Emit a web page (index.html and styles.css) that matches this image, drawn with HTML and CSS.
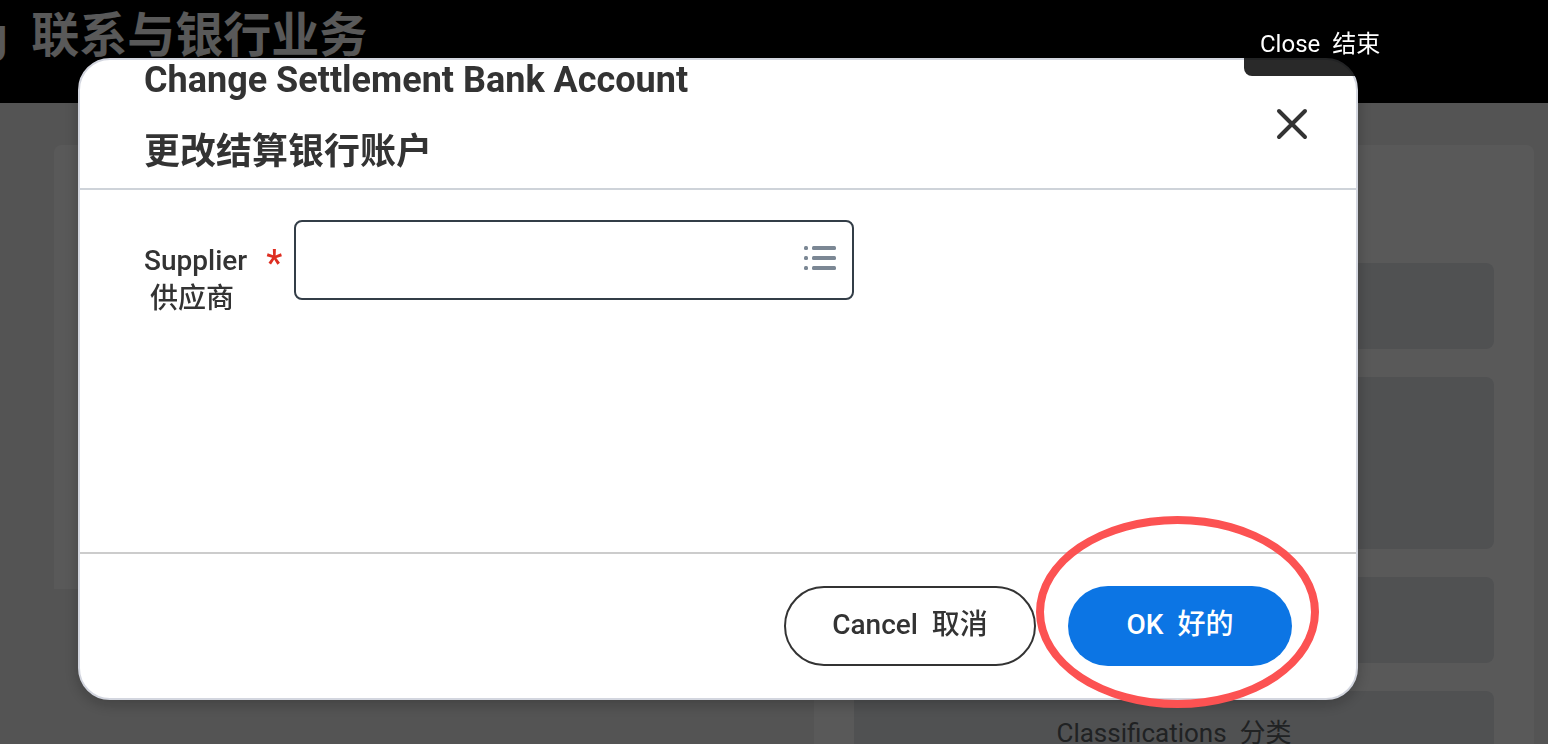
FILE: index.html
```html
<!DOCTYPE html>
<html lang="en">
<head>
  <meta charset="UTF-8">
  <title>Change Settlement Bank Account</title>
  <link rel="stylesheet" href="styles.css">
</head>
<body>

  <header class="page-header">
    <h1>g&nbsp; 联系与银行业务</h1>
  </header>

  <main class="page-content">
    <section class="panel panel-short"></section>
    <section class="panel panel-tasks">
      <div class="task"></div>
      <div class="task task-tall"></div>
      <div class="task"></div>
      <button class="task" type="button">Classifications&nbsp; 分类</button>
    </section>
  </main>

  <div class="overlay">
    <div class="modal" role="dialog" aria-labelledby="modal-title">
      <div class="modal-header">
        <h2 id="modal-title">Change Settlement Bank Account<br>更改结算银行账户</h2>
        <div class="close-wrap">
          <button class="close" type="button" aria-label="Close">
            <svg width="32" height="32" viewBox="0 0 32 32">
              <path d="M3 3L29 29M29 3L3 29" stroke="#333" stroke-width="4" stroke-linecap="round"/>
            </svg>
          </button>
          <span class="tooltip">Close&nbsp; 结束</span>
        </div>
      </div>

      <div class="modal-body">
        <label for="supplier">Supplier<br>供应商&nbsp;</label>
        <span class="required">*</span>
        <div class="prompt">
          <input type="text" id="supplier" required>
          <svg class="list-icon" width="32" height="24" viewBox="0 0 32 24" fill="#7b8794">
            <rect x="0" y="0" width="4" height="4" rx="1.5"/>
            <rect x="8" y="0" width="24" height="4" rx="1.5"/>
            <rect x="0" y="10" width="4" height="4" rx="1.5"/>
            <rect x="8" y="10" width="24" height="4" rx="1.5"/>
            <rect x="0" y="20" width="4" height="4" rx="1.5"/>
            <rect x="8" y="20" width="24" height="4" rx="1.5"/>
          </svg>
        </div>
      </div>

      <div class="modal-footer">
        <button class="btn btn-cancel" type="button">Cancel&nbsp; 取消</button>
        <button class="btn btn-ok" type="button">OK&nbsp; 好的</button>
      </div>
    </div>
  </div>

</body>
</html>
```

FILE: styles.css
```css
* {
  box-sizing: border-box;
}

body {
  margin: 0;
  height: 100vh;
  overflow: hidden;
  background-color: #f0f0f0;
  color: #333;
  font-family: Roboto, "Noto Sans CJK SC", sans-serif;
}

button,
input {
  font-family: inherit;
  color: inherit;
}

/* page behind the dialog */
.page-header {
  height: 103px;
  background-color: #000;
  overflow: hidden;
}

h1 {
  margin: 0 0 0 -20px;
  color: #fff;
  font-size: 48px;
  font-weight: 700;
  line-height: 72px;
  white-space: nowrap;
}

.page-content {
  display: grid;
  grid-template-columns: 1fr 1fr;
  gap: 40px;
  align-items: start;
  padding: 42px 14px 0 54px;
}

.panel {
  background-color: #fff;
  border-radius: 8px 8px 0 0;
}

.panel-short {
  height: 444px;
}

.panel-tasks {
  display: flex;
  flex-direction: column;
  gap: 28px;
  padding: 118px 40px 40px;
}

.task {
  height: 86px;
  padding: 0 0 8px;
  border: none;
  border-radius: 8px;
  background-color: #e4e7ea;
  color: #5c6166;
  font-size: 26px;
}

.task-tall {
  height: 172px;
}

/* dialog */
.overlay {
  position: fixed;
  inset: 0;
  display: flex;
  padding: 58px 190px 44px 78px;
  background-color: rgba(0, 0, 0, 0.65);
}

.modal {
  flex: 1;
  display: flex;
  flex-direction: column;
  background-color: #fff;
  border: 2px solid #d3d6df;
  border-radius: 32px;
  box-shadow: 0 4px 16px rgba(0, 0, 0, 0.25);
}

.modal-header {
  display: flex;
  justify-content: space-between;
  align-items: flex-end;
  height: 130px;
  padding: 0 32px 0 64px;
  border-bottom: 2px solid #ced3d9;
}

h2 {
  margin: 0;
  font-size: 36px;
  font-weight: 700;
  line-height: 72px;
}

.close-wrap {
  position: relative;
  align-self: center;
}

.close {
  display: flex;
  align-items: center;
  justify-content: center;
  width: 64px;
  height: 64px;
  padding: 0;
  border: none;
  background: none;
  cursor: pointer;
}

.tooltip {
  position: absolute;
  bottom: 80px;
  left: -16px;
  padding: 0 16px;
  border-radius: 8px;
  background-color: rgba(0, 0, 0, 0.84);
  color: #fff;
  font-size: 24px;
  line-height: 64px;
  white-space: nowrap;
}

.modal-body {
  flex: 1;
  display: flex;
  align-items: flex-start;
  padding: 30px 64px;
}

label {
  padding-top: 22px;
  font-size: 28px;
  font-weight: 500;
  line-height: 38px;
  text-align: center;
}

.required {
  width: 16px;
  margin: 24px 12px 0 19px;
  color: #de2e21;
  font-size: 36px;
  font-weight: 500;
  line-height: 38px;
}

.prompt {
  position: relative;
  width: 560px;
}

.prompt input {
  display: block;
  width: 100%;
  height: 80px;
  padding: 0 64px 0 16px;
  border: 2px solid #333d47;
  border-radius: 8px;
  background-color: #fff;
  font-size: 28px;
}

.list-icon {
  position: absolute;
  top: 26px;
  right: 18px;
}

.modal-footer {
  display: flex;
  justify-content: flex-end;
  gap: 32px;
  padding: 32px 64px;
  border-top: 2px solid #ccc;
}

.btn {
  height: 80px;
  padding: 0 0 8px;
  border-radius: 40px;
  font-size: 28px;
  font-weight: 500;
  cursor: pointer;
}

.btn-cancel {
  width: 252px;
  border: 2px solid #333;
  background-color: #fff;
}

.btn-ok {
  position: relative;
  width: 224px;
  border: none;
  background-color: #0c75e4;
  color: #fff;
}

/* ring that points out the OK button */
.btn-ok::after {
  content: "";
  position: absolute;
  inset: -70px -27px -42px -32px;
  border: 8px solid #fc5252;
  border-radius: 50%;
  pointer-events: none;
}
```
